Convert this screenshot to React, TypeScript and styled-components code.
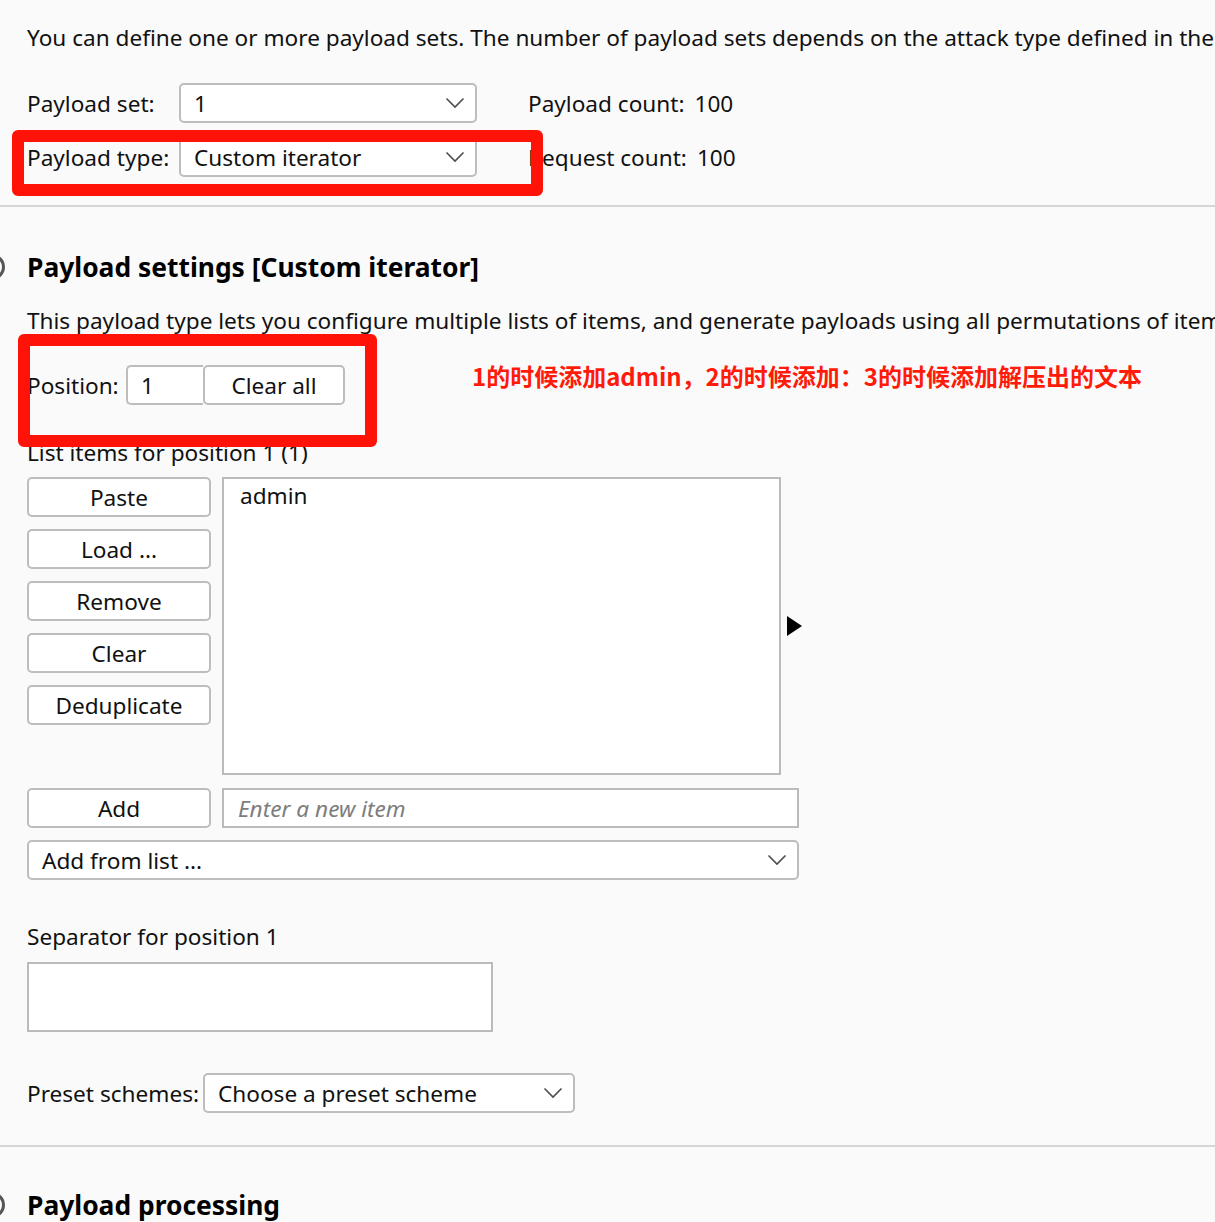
import React from "react";
import styled, { createGlobalStyle } from "styled-components";

const GlobalStyle = createGlobalStyle`
  html, body {
    margin: 0;
    padding: 0;
    background: #fafafa;
    overflow: hidden;
  }
  body {
    font-family: "Noto Sans", "Open Sans", sans-serif;
    color: #111;
  }
  * { box-sizing: border-box; }
`;

const Page = styled.div`
  position: relative;
  width: 1215px;
  height: 1222px;
  overflow: hidden;
  background: #fafafa;
  font-size: 22.6px;
`;

const Section = styled.section`
  display: flex;
  flex-direction: column;
  align-items: flex-start;
  padding-left: 27px;
`;

const Divider = styled.hr<{ $mt: number }>`
  margin: ${(p) => p.$mt}px 0 0 0;
  border: none;
  height: 2px;
  width: 100%;
  background: #d6d6d6;
`;

const HeadingRow = styled.div<{ $mt: number }>`
  display: flex;
  align-items: center;
  gap: 22px;
  margin-left: -48px;
  margin-top: ${(p) => p.$mt}px;
  height: 32px;
`;

const HeadingText = styled.h2`
  margin: 0;
  font-size: 26.4px;
  font-weight: 700;
  line-height: 32px;
  color: #000;
  white-space: nowrap;
`;

const HeadingIcon = () => (
  <svg width="26" height="26" viewBox="0 0 26 26">
    <circle cx="13" cy="13" r="11.5" fill="none" stroke="#555" strokeWidth="3" />
  </svg>
);

const Para = styled.p<{ $mt: number }>`
  margin: ${(p) => p.$mt}px 0 0 0;
  line-height: 32px;
  height: 32px;
  white-space: nowrap;
`;

const FormGrid = styled.div`
  display: grid;
  grid-template-columns: 152px 298px auto;
  row-gap: 14px;
  margin-top: 29px;
  align-items: center;
`;

const FieldLabel = styled.span<{ $w?: number }>`
  white-space: nowrap;
  flex: none;
  width: ${(p) => (p.$w ? `${p.$w}px` : "auto")};
`;

const StatText = styled.span`
  display: flex;
  gap: 10px;
  margin-left: 51px;
  white-space: nowrap;
`;

const SelectBox = styled.div<{ $w: number }>`
  display: flex;
  align-items: center;
  justify-content: space-between;
  width: ${(p) => p.$w}px;
  height: 40px;
  padding: 0 10px 0 13px;
  background: #fff;
  border: 2px solid #bfbcbc;
  border-radius: 5px;
  white-space: nowrap;
`;

const Chevron = () => (
  <svg width="20" height="12" viewBox="0 0 20 12">
    <polyline points="1.5,1.5 10,10 18.5,1.5" fill="none" stroke="#4d4d4d" strokeWidth="1.6" />
  </svg>
);

const Select = ({ value, width }: { value: string; width: number }) => (
  <SelectBox $w={width}>
    <span>{value}</span>
    <Chevron />
  </SelectBox>
);

const PositionRow = styled.div`
  display: flex;
  align-items: center;
  margin-top: 28px;
  height: 40px;
`;

const PositionField = styled.div`
  display: flex;
  align-items: center;
  width: 77px;
  height: 40px;
  padding-left: 13px;
  background: #fff;
  border: 2px solid #bfbcbc;
  border-radius: 5px 0 0 5px;
  border-right: none;
`;

const ActionButton = styled.button<{ $w?: number }>`
  font: inherit;
  color: #111;
  width: ${(p) => (p.$w ? `${p.$w}px` : "100%")};
  height: 40px;
  padding: 0;
  background: #fff;
  border: 2px solid #bfbcbc;
  border-radius: 5px;
  cursor: pointer;
`;

const ListRow = styled.div`
  display: flex;
  align-items: center;
  gap: 11px;
  margin-top: 8px;
`;

const ButtonColumn = styled.div`
  display: flex;
  flex-direction: column;
  gap: 12px;
  width: 184px;
  align-self: flex-start;
`;

const ItemList = styled.div`
  width: 559px;
  height: 298px;
  padding: 1px 16px;
  background: #fff;
  border: 2px solid #bcbaba;
  line-height: 32px;
`;

const ExpandArrow = styled.div`
  width: 0;
  height: 0;
  margin-left: -5px;
  border-top: 10px solid transparent;
  border-bottom: 10px solid transparent;
  border-left: 15px solid #000;
`;

const AddRow = styled.div`
  display: flex;
  gap: 11px;
  margin-top: 13px;
`;

const ItemInput = styled.input`
  font: inherit;
  width: 577px;
  height: 40px;
  padding: 0 14px;
  background: #fff;
  border: 2px solid #bcbaba;
  outline: none;
  &::placeholder {
    font-style: italic;
    color: #7d7d7d;
  }
`;

const SpacedBlock = styled.div<{ $mt: number }>`
  margin-top: ${(p) => p.$mt}px;
`;

const SeparatorBox = styled.div`
  width: 466px;
  height: 70px;
  margin-top: 9px;
  background: #fff;
  border: 2px solid #bcbaba;
`;

const PresetRow = styled.div`
  display: flex;
  align-items: center;
  margin-top: 41px;
`;

const AnnotationFrame = styled.div<{ $x: number; $y: number; $w: number; $h: number }>`
  position: absolute;
  left: ${(p) => p.$x}px;
  top: ${(p) => p.$y}px;
  width: ${(p) => p.$w}px;
  height: ${(p) => p.$h}px;
  border: 12px solid #ff1208;
  border-radius: 6px;
  pointer-events: none;
`;

const AnnotationNote = styled.div`
  position: absolute;
  left: 472px;
  top: 360px;
  font-family: "Noto Sans CJK SC", "Noto Sans", sans-serif;
  font-weight: 700;
  font-size: 24px;
  line-height: 32px;
  color: #ff1a0a;
  white-space: nowrap;
`;

export default function App() {
  return (
    <Page>
      <GlobalStyle />
      <Section>
        <HeadingRow $mt={-32}>
          <HeadingIcon />
          <HeadingText>Payload sets</HeadingText>
        </HeadingRow>
        <Para $mt={22}>
          You can define one or more payload sets. The number of payload sets depends on the attack type defined in the Positions tab.
        </Para>
        <FormGrid>
          <FieldLabel>Payload set:</FieldLabel>
          <Select value="1" width={298} />
          <StatText>
            <span>Payload count:</span>
            <span>100</span>
          </StatText>
          <FieldLabel>Payload type:</FieldLabel>
          <Select value="Custom iterator" width={298} />
          <StatText>
            <span>Request count:</span>
            <span>100</span>
          </StatText>
        </FormGrid>
      </Section>
      <Divider $mt={28} />
      <Section>
        <HeadingRow $mt={44}>
          <HeadingIcon />
          <HeadingText>Payload settings [Custom iterator]</HeadingText>
        </HeadingRow>
        <Para $mt={22}>
          This payload type lets you configure multiple lists of items, and generate payloads using all permutations of items in the lists.
        </Para>
        <PositionRow>
          <FieldLabel $w={99}>Position:</FieldLabel>
          <PositionField>1</PositionField>
          <ActionButton $w={142}>Clear all</ActionButton>
        </PositionRow>
        <Para $mt={32}>List items for position 1 (1)</Para>
        <ListRow>
          <ButtonColumn>
            <ActionButton>Paste</ActionButton>
            <ActionButton>Load ...</ActionButton>
            <ActionButton>Remove</ActionButton>
            <ActionButton>Clear</ActionButton>
            <ActionButton>Deduplicate</ActionButton>
          </ButtonColumn>
          <ItemList>admin</ItemList>
          <ExpandArrow />
        </ListRow>
        <AddRow>
          <ActionButton $w={184}>Add</ActionButton>
          <ItemInput placeholder="Enter a new item" />
        </AddRow>
        <SpacedBlock $mt={12}>
          <Select value="Add from list ..." width={772} />
        </SpacedBlock>
        <Para $mt={41}>Separator for position 1</Para>
        <SeparatorBox />
        <PresetRow>
          <FieldLabel $w={176}>Preset schemes:</FieldLabel>
          <Select value="Choose a preset scheme" width={372} />
        </PresetRow>
      </Section>
      <Divider $mt={32} />
      <Section>
        <HeadingRow $mt={42}>
          <HeadingIcon />
          <HeadingText>Payload processing</HeadingText>
        </HeadingRow>
      </Section>
      <AnnotationFrame $x={12} $y={130} $w={531} $h={66} />
      <AnnotationFrame $x={18} $y={334} $w={359} $h={113} />
      <AnnotationNote>1的时候添加admin，2的时候添加：3的时候添加解压出的文本</AnnotationNote>
    </Page>
  );
}
